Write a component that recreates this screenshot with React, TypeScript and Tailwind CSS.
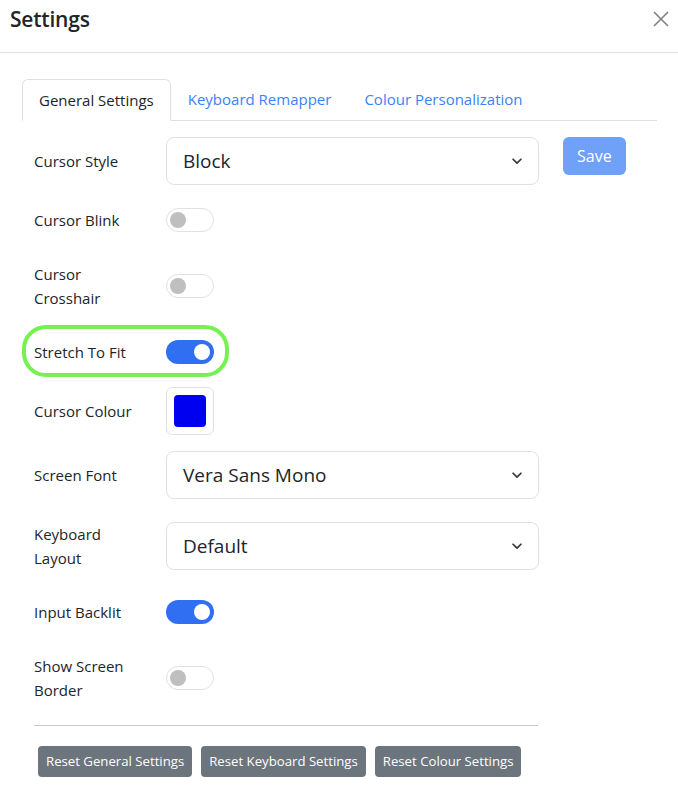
import React from "react";

function Toggle({ on }: { on: boolean }) {
  return on ? (
    <div className="w-[48px] h-[24px] rounded-full bg-[#316ff2] flex items-center justify-end pr-[4px]">
      <div className="w-[16px] h-[16px] rounded-full bg-white" />
    </div>
  ) : (
    <div className="w-[48px] h-[24px] rounded-full border border-[#dee2e6] bg-white flex items-center pl-[3px]">
      <div className="w-[16px] h-[16px] rounded-full bg-[#bfbfbf]" />
    </div>
  );
}

function Select({ value }: { value: string }) {
  return (
    <div className="w-[373px] h-[48px] rounded-[8px] border border-[#dee2e6] flex items-center justify-between pl-[16px] pr-[14px]">
      <span className="text-[19px] text-[#212529]">{value}</span>
      <svg width="14" height="14" viewBox="0 0 16 16" fill="none" stroke="#343a40" strokeWidth="2" strokeLinecap="round" strokeLinejoin="round">
        <path d="M3.5 6l4.5 4.5L12.5 6" />
      </svg>
    </div>
  );
}

function Row({ label, children }: { label: React.ReactNode; children: React.ReactNode }) {
  return (
    <div className="flex items-center mb-[16px]">
      <div className="w-[132px] px-[12px] py-[7px] leading-[24px] text-[15px] text-[#212529]">{label}</div>
      <div className="pl-[12px]">{children}</div>
    </div>
  );
}

export default function App() {
  return (
    <div className="w-[678px] h-[788px] bg-white text-[#212529] font-['Open_Sans',sans-serif] overflow-hidden">
      {/* Header */}
      <div className="h-[53px] border-b border-[#dee2e6] flex items-start justify-between pl-[10px] pr-[9px] pt-[4px]">
        <h5 className="text-[21px] leading-[30px] font-semibold tracking-[-0.2px]">Settings</h5>
        <svg className="mt-[7px]" width="16" height="16" viewBox="0 0 16 16" fill="none" stroke="#808080" strokeWidth="1.6">
          <path d="M1 1l14 14M15 1L1 15" />
        </svg>
      </div>

      <div className="px-[22px] pt-[26px]">
        {/* Tabs */}
        <div className="w-[635px] flex border-b border-[#dee2e6] text-[15px] leading-[24px]">
          <div className="-mb-px px-[16px] py-[8px] border border-[#dee2e6] border-b-white rounded-t-[6px] bg-white text-[#212529]">
            General Settings
          </div>
          <div className="px-[16px] py-[8px] ml-[1px] text-[#3c82f6]">Keyboard Remapper</div>
          <div className="px-[17px] py-[8px] text-[#3c82f6]">Colour Personalization</div>
        </div>

        {/* Tab content */}
        <div className="pt-[16px]">
          <div className="flex items-start">
            <div>
              <Row label="Cursor Style">
                <Select value="Block" />
              </Row>
              <Row label="Cursor Blink">
                <Toggle on={false} />
              </Row>
              <Row label={<>Cursor<br />Crosshair</>}>
                <Toggle on={false} />
              </Row>
              <div className="relative">
                <div className="absolute left-0 top-[-8px] w-[207px] h-[52px] rounded-[24px] border-[4px] border-[#74f24f] pointer-events-none" />
                <Row label={<span className="whitespace-nowrap">Stretch To Fit</span>}>
                  <Toggle on={true} />
                </Row>
              </div>
              <Row label={<span className="whitespace-nowrap">Cursor Colour</span>}>
                <div className="w-[48px] h-[48px] rounded-[6px] border border-[#dee2e6] p-[7px]">
                  <div className="w-full h-full rounded-[4px] bg-[#0000f0]" />
                </div>
              </Row>
              <Row label="Screen Font">
                <Select value="Vera Sans Mono" />
              </Row>
              <Row label={<>Keyboard<br />Layout</>}>
                <Select value="Default" />
              </Row>
              <Row label="Input Backlit">
                <Toggle on={true} />
              </Row>
              <Row label={<>Show Screen<br />Border</>}>
                <Toggle on={false} />
              </Row>
            </div>
            <button className="ml-[24px] h-[38px] px-[14px] rounded-[6px] bg-[#6ea1f7] text-white text-[16px]">
              Save
            </button>
          </div>

          <div className="ml-[12px] w-[504px] border-t border-[#c9cacc]" />

          <div className="flex gap-[9px] ml-[16px] mt-[20px]">
            <button className="h-[31px] px-[8px] rounded-[4px] bg-[#6c757d] text-white text-[13.2px]">Reset General Settings</button>
            <button className="h-[31px] px-[8px] rounded-[4px] bg-[#6c757d] text-white text-[13.2px]">Reset Keyboard Settings</button>
            <button className="h-[31px] px-[8px] rounded-[4px] bg-[#6c757d] text-white text-[13.2px]">Reset Colour Settings</button>
          </div>
        </div>
      </div>
    </div>
  );
}
